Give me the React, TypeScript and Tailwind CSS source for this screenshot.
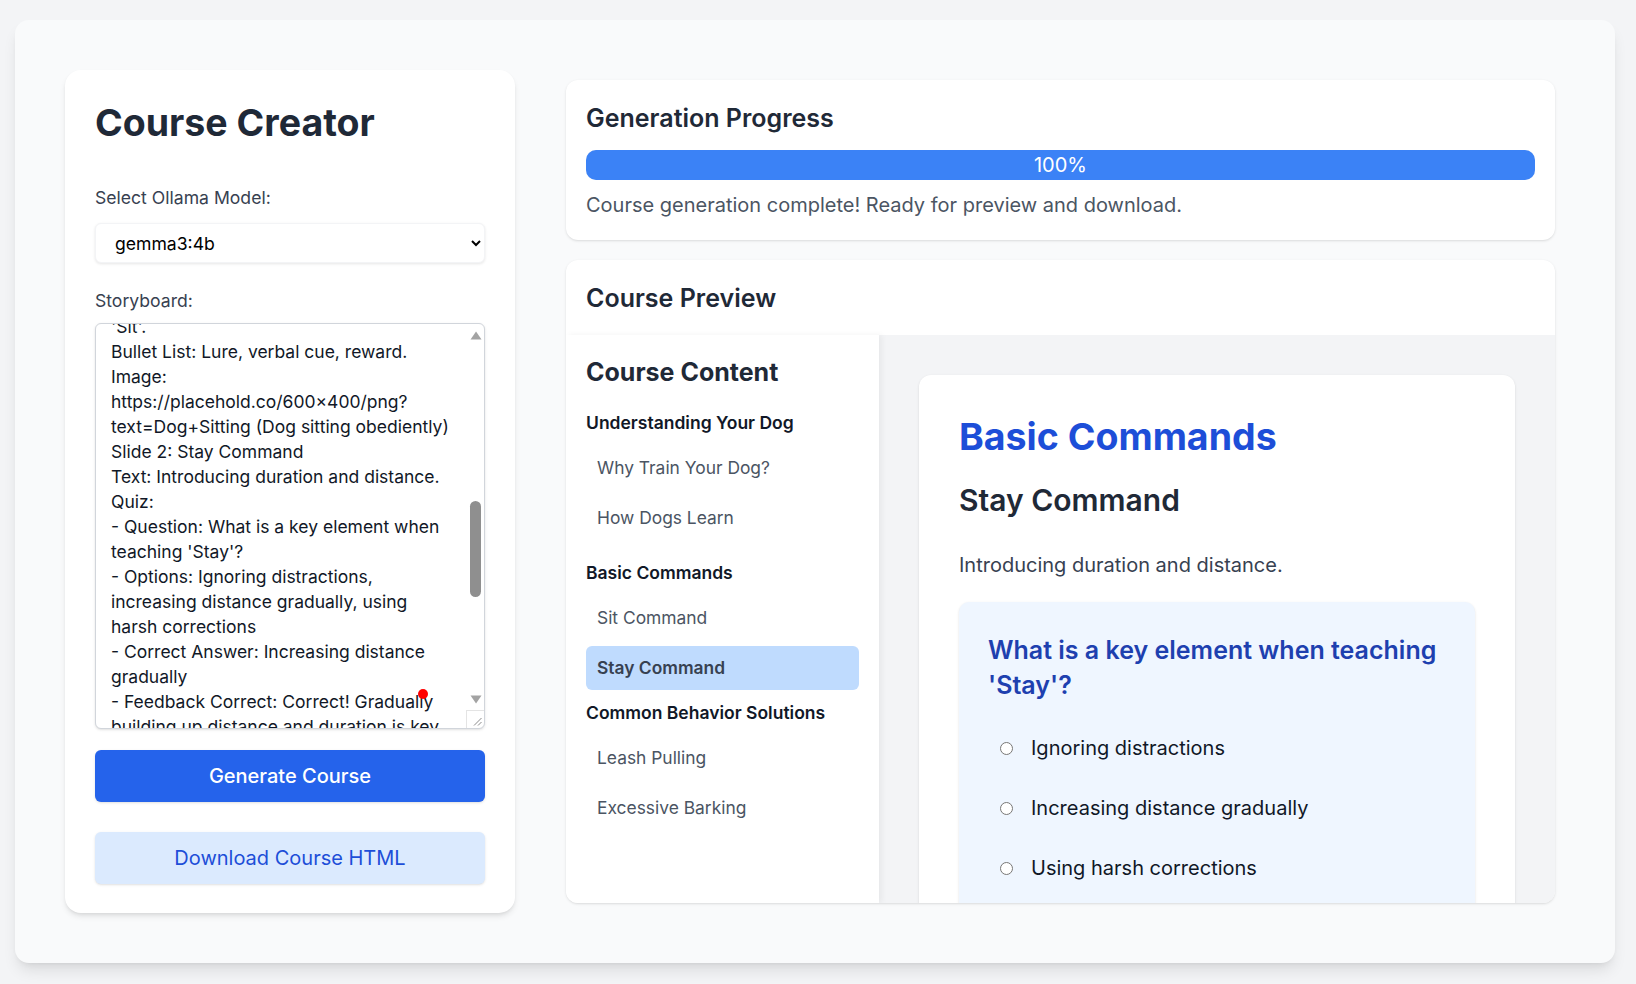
import { useLayoutEffect, useRef } from "react";

const storyboard = `Course Title: Dog Training Fundamentals
Module 1: Understanding Your Dog
Slide 1: Why Train Your Dog?
Text: Training builds a strong bond and keeps your dog safe.
Slide 2: How Dogs Learn
Text: Dogs learn through association and rewards.
Module 2: Basic Commands
Slide 1: Sit Command
Text: Teaching your dog the first command,
'Sit'.
Bullet List: Lure, verbal cue, reward.
Image: https://placehold.co/600x400/png?text=Dog+Sitting (Dog sitting obediently)
Slide 2: Stay Command
Text: Introducing duration and distance.
Quiz:
- Question: What is a key element when teaching 'Stay'?
- Options: Ignoring distractions, increasing distance gradually, using harsh corrections
- Correct Answer: Increasing distance gradually
- Feedback Correct: Correct! Gradually building up distance and duration is key.
- Feedback Incorrect: Not quite. Build duration and distance slowly.
Module 3: Common Behavior Solutions
Slide 1: Leash Pulling
Text: Teach loose-leash walking with consistency.
Slide 2: Excessive Barking
Text: Identify triggers and reward quiet behavior.`;

const outline = [
  {
    title: "Understanding Your Dog",
    items: ["Why Train Your Dog?", "How Dogs Learn"],
    gap: "mb-[20px]",
  },
  {
    title: "Basic Commands",
    items: ["Sit Command", "Stay Command"],
    gap: "mb-[10px]",
  },
  {
    title: "Common Behavior Solutions",
    items: ["Leash Pulling", "Excessive Barking"],
    gap: "",
  },
];

const options = [
  "Ignoring distractions",
  "Increasing distance gradually",
  "Using harsh corrections",
];

// the classic scrollbar the storyboard box shows in the screenshot
function FakeScrollbar() {
  return (
    <div className="pointer-events-none absolute top-[1px] right-[1px] bottom-[1px] w-[16px]">
      <svg className="absolute left-[2px] top-[7px]" width="12" height="9" viewBox="0 0 12 9">
        <path d="M6 0.5 L11.5 8.5 L0.5 8.5 Z" fill="#a3a3a3" />
      </svg>
      <div className="absolute left-[2px] top-[177px] w-[11px] h-[96px] rounded-full bg-[#8f8f8f]" />
      <svg className="absolute left-[2px] top-[371px]" width="12" height="9" viewBox="0 0 12 9">
        <path d="M0.5 0.5 L11.5 0.5 L6 8.5 Z" fill="#a3a3a3" />
      </svg>
      <div className="absolute right-0 bottom-0 w-[18px] h-[18px] border-l border-t border-[#e4e4e4] rounded-br-md">
        <svg className="absolute right-[2px] bottom-[2px]" width="9" height="9" viewBox="0 0 9 9">
          <path d="M8.5 1 L1 8.5 M8.5 5 L5 8.5" stroke="#8a8a8a" strokeWidth="1" fill="none" />
        </svg>
      </div>
    </div>
  );
}

function CreatorPanel() {
  const areaRef = useRef<HTMLTextAreaElement>(null);

  // scroll the storyboard so the "Bullet List" line sits at the top
  useLayoutEffect(() => {
    const ta = areaRef.current;
    if (!ta) return;
    const probe = ta.cloneNode() as HTMLTextAreaElement;
    probe.style.height = "0px";
    probe.value = storyboard.slice(0, storyboard.indexOf("\nBullet List"));
    ta.parentNode?.appendChild(probe);
    const offset = probe.scrollHeight - 30;
    probe.remove();
    ta.scrollTop = offset;
  }, []);

  return (
    <div className="w-[450px] h-full shrink-0 bg-white rounded-2xl shadow-md p-[30px]">
      <h1 className="text-[37.5px] leading-[46px] font-bold text-[#1f2937]">Course Creator</h1>

      <label className="block mt-[39px] text-[17.6px] leading-[25px] text-[#374151]">
        Select Ollama Model:
      </label>
      <select
        defaultValue="gemma3:4b"
        className="mt-[13px] w-full h-[40px] pl-[15px] pr-[4px] bg-white rounded-md text-[17.6px] text-black shadow-[0_1px_3px_rgba(0,0,0,0.1)] border border-[#f3f4f6]"
      >
        <option>gemma3:4b</option>
        <option>llama3.2:3b</option>
        <option>mistral:7b</option>
      </select>

      <label className="block mt-[25px] text-[17.6px] leading-[25px] text-[#374151]">Storyboard:</label>
      <div className="relative mt-[10px]">
        <textarea
          ref={areaRef}
          defaultValue={storyboard}
          className="block w-full h-[406px] pl-[15px] pt-[15px] pb-[15px] pr-[31px] overflow-hidden resize-none border border-[#d1d5db] rounded-md bg-white text-[17.5px] leading-[25px] text-[#111827] shadow-sm"
        />
        <FakeScrollbar />
        <span className="absolute left-[323px] top-[366px] w-[10px] h-[10px] rounded-full bg-[#ff0000]" />
      </div>

      <button className="mt-[21px] w-full h-[52px] rounded-md bg-[#2563eb] text-white text-[20px] font-medium shadow-sm">
        Generate Course
      </button>
      <button className="mt-[30px] w-full h-[52px] rounded-md bg-[#dbeafe] text-[#1d4ed8] text-[20px] shadow-sm">
        Download Course HTML
      </button>
    </div>
  );
}

function ProgressCard() {
  return (
    <div className="bg-white rounded-xl shadow-sm px-5 pt-[23px] pb-[21px]">
      <h2 className="text-[25px] leading-[30px] font-semibold text-[#1f2937]">Generation Progress</h2>
      <div className="mt-[17px] h-[30px] w-full rounded-[10px] bg-[#e5e7eb]">
        <div className="h-full w-full rounded-[10px] bg-[#3b82f6] flex items-center justify-center text-white text-[20px]">
          100%
        </div>
      </div>
      <p className="mt-[11px] text-[20px] leading-[28px] text-[#4b5563]">
        Course generation complete! Ready for preview and download.
      </p>
    </div>
  );
}

function PreviewCard() {
  return (
    <div className="flex-1 min-h-0 flex flex-col bg-white rounded-xl shadow-sm overflow-hidden">
      <h2 className="px-5 pt-[23px] pb-[22px] text-[25px] leading-[30px] font-semibold text-[#1f2937]">
        Course Preview
      </h2>
      <div className="flex-1 min-h-0 flex">
        <aside className="w-[313px] shrink-0 bg-white px-5 pt-[22px] shadow-[3px_0_6px_rgba(0,0,0,0.05)] z-10">
          <h3 className="text-[25px] leading-[30px] font-bold text-[#1f2937]">Course Content</h3>
          <div className="mt-[23px]">
            {outline.map((group) => (
              <div key={group.title} className={group.gap}>
                <h4 className="text-[17.5px] leading-[26px] font-semibold text-[#111827]">{group.title}</h4>
                <ul className="mt-[10px] flex flex-col gap-[6px]">
                  {group.items.map((item) => {
                    const active = item === "Stay Command";
                    return (
                      <li
                        key={item}
                        className={
                          active
                            ? "pl-[11px] pr-[10px] py-[10px] text-[17.4px] leading-[24px] rounded-md bg-[#bfdbfe] font-semibold text-[#374151]"
                            : "pl-[11px] pr-[10px] py-[10px] text-[17.4px] leading-[24px] rounded-md text-[#4b5563]"
                        }
                      >
                        {item}
                      </li>
                    );
                  })}
                </ul>
              </div>
            ))}
          </div>
        </aside>

        <main className="flex-1 min-w-0 bg-[#f3f4f6] p-10 overflow-hidden">
          <div className="bg-white rounded-xl shadow-sm p-10">
            <h1 className="text-[37.5px] leading-[44px] font-bold text-[#1d4ed8]">Basic Commands</h1>
            <h2 className="mt-[23px] text-[30px] leading-[36px] font-semibold text-[#1f2937]">Stay Command</h2>
            <p className="mt-[33px] text-[20px] leading-[29px] text-[#374151]">Introducing duration and distance.</p>

            <div className="mt-[22px] bg-[#eff6ff] rounded-[10px] shadow-sm px-[29px] pt-[31px] pb-[30px]">
              <p className="text-[25px] leading-[35px] font-semibold text-[#1e40af]">
                What is a key element when teaching 'Stay'?
              </p>
              <div className="mt-[30px] flex flex-col gap-[30px]">
                {options.map((opt) => (
                  <label key={opt} className="flex items-center text-[20px] leading-[30px] text-[#111827]">
                    <input type="radio" name="quiz" className="m-0 ml-[12px] mr-[18px]" />
                    {opt}
                  </label>
                ))}
              </div>
            </div>
          </div>
        </main>
      </div>
    </div>
  );
}

export default function App() {
  return (
    <div className="min-h-screen bg-[#f3f4f6] pt-[20px] pl-[15px] font-[Inter,sans-serif]">
      <div className="w-[1600px] h-[943px] bg-[#f9fafb] rounded-[14px] shadow-lg p-[50px] flex items-stretch gap-[41px]">
        <CreatorPanel />
        <div className="flex-1 min-w-0 m-[10px] flex flex-col gap-5">
          <ProgressCard />
          <PreviewCard />
        </div>
      </div>
    </div>
  );
}
